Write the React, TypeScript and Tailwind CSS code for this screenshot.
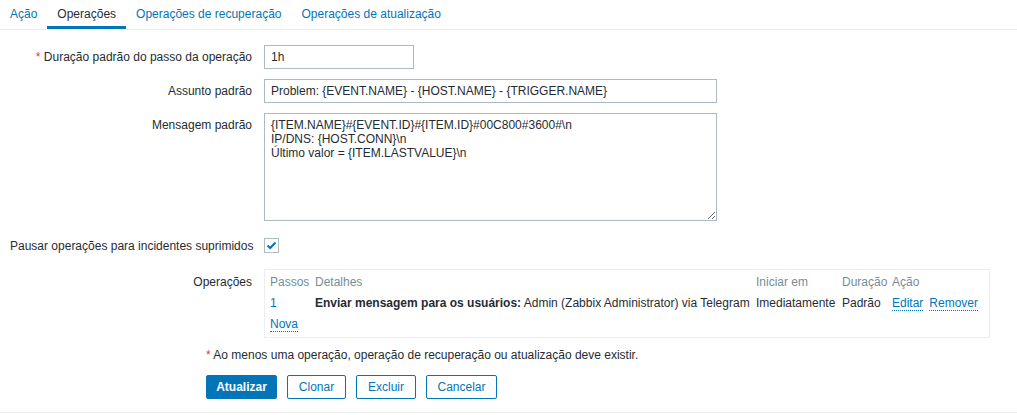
import type { ReactNode } from "react";

const tabs = [
  "Ação",
  "Operações",
  "Operações de recuperação",
  "Operações de atualização",
];

const message =
  "{ITEM.NAME}#{EVENT.ID}#{ITEM.ID}#00C800#3600#\\n\nIP/DNS: {HOST.CONN}\\n\nÚltimo valor = {ITEM.LASTVALUE}\\n";

function Row({
  label,
  required,
  className = "",
  labelClass = "",
  children,
}: {
  label: string;
  required?: boolean;
  className?: string;
  labelClass?: string;
  children: ReactNode;
}) {
  return (
    <div className={`flex items-start ${className}`}>
      <div
        className={`w-[264px] shrink-0 pr-[12px] text-right leading-[24px] whitespace-nowrap ${labelClass}`}
      >
        {required && <span className="text-[#e33734]">* </span>}
        {label}
      </div>
      {children}
    </div>
  );
}

function DottedLink({ children, className = "" }: { children: ReactNode; className?: string }) {
  return (
    <a
      className={`inline-block cursor-pointer border-b border-dotted border-[#0275b8] leading-[13px] text-[#0275b8] ${className}`}
    >
      {children}
    </a>
  );
}

export default function App() {
  return (
    <div className="min-h-screen bg-white font-['Liberation_Sans',Arial,sans-serif] text-[12px] text-[#1f2c33]">
      <div className="border-b border-[#ebeef0] pb-[13px]">
        {/* Tabs */}
        <div className="flex h-[30px] border-b border-[#ebeef0]">
          {tabs.map((t, i) => (
            <div
              key={t}
              className={`px-[10px] pt-[7px] leading-[14px] ${
                i === 1
                  ? "border-b-[3px] border-[#0275b8] text-[#1f2c33]"
                  : "text-[#0275b8]"
              }`}
            >
              {t}
            </div>
          ))}
        </div>

        {/* Form */}
        <div className="mt-[15px]">
          <Row label="Duração padrão do passo da operação" required>
            <input
              defaultValue="1h"
              className="h-[24px] w-[150px] border border-[#acbbc2] px-[6px] text-[12px] text-[#1f2c33] outline-none"
            />
          </Row>

          <Row label="Assunto padrão" className="mt-[10px]">
            <input
              defaultValue="Problem: {EVENT.NAME} - {HOST.NAME} - {TRIGGER.NAME}"
              className="h-[24px] w-[453px] border border-[#acbbc2] px-[6px] text-[12px] text-[#1f2c33] outline-none"
            />
          </Row>

          <Row label="Mensagem padrão" className="mt-[10px]">
            <textarea
              defaultValue={message}
              className="h-[108px] w-[453px] border border-[#acbbc2] px-[6px] pt-[4px] text-[12px] leading-[14px] text-[#1f2c33] outline-none"
            />
          </Row>

          <div className="mt-[13px] flex items-start">
            <div className="w-[264px] shrink-0 pl-[10px] pr-[12px] text-right leading-[24px] whitespace-nowrap">
              Pausar operações para incidentes suprimidos
            </div>
            <div className="mt-[4px] flex h-[15px] w-[15px] items-center justify-center border border-[#acbbc2] bg-white">
              <svg width="11" height="9" viewBox="0 0 11 9">
                <path
                  d="M1.5 4.5 L4.2 7 L9.5 1.5"
                  fill="none"
                  stroke="#0275b8"
                  strokeWidth="2"
                />
              </svg>
            </div>
          </div>

          <Row label="Operações" className="mt-[11px]" labelClass="pt-[1px]">
            <div className="w-[726px] border border-[#ebeef0] px-[5px] pt-[2px] pb-[2px]">
              <div className="grid grid-cols-[45px_441px_86px_50px_1fr] leading-[21px] whitespace-nowrap">
                <div className="text-[#768d99]">Passos</div>
                <div className="text-[#768d99]">Detalhes</div>
                <div className="text-[#768d99]">Iniciar em</div>
                <div className="text-[#768d99]">Duração</div>
                <div className="text-[#768d99]">Ação</div>

                <div className="text-[#0275b8]">1</div>
                <div>
                  <span className="font-bold">Enviar mensagem para os usuários:</span>{" "}
                  Admin (Zabbix Administrator) via Telegram
                </div>
                <div>Imediatamente</div>
                <div>Padrão</div>
                <div>
                  <DottedLink className="mr-[6px]">Editar</DottedLink>
                  <DottedLink>Remover</DottedLink>
                </div>

                <div className="col-span-5">
                  <DottedLink>Nova</DottedLink>
                </div>
              </div>
            </div>
          </Row>

          {/* Footer */}
          <div className="mt-[5px] pl-[206px] leading-[24px]">
            <span className="text-[#e33734]">*</span> Ao menos uma operação,
            operação de recuperação ou atualização deve existir.
          </div>
          <div className="mt-[8px] flex gap-[10px] pl-[206px]">
            <button className="h-[24px] w-[71px] rounded-[2px] border border-[#0275b8] bg-[#0275b8] text-[12px] font-bold text-white">
              Atualizar
            </button>
            <button className="h-[24px] w-[59px] rounded-[2px] border border-[#0275b8] bg-white text-[12px] text-[#0275b8]">
              Clonar
            </button>
            <button className="h-[24px] w-[60px] rounded-[2px] border border-[#0275b8] bg-white text-[12px] text-[#0275b8]">
              Excluir
            </button>
            <button className="h-[24px] w-[71px] rounded-[2px] border border-[#0275b8] bg-white text-[12px] text-[#0275b8]">
              Cancelar
            </button>
          </div>
        </div>
      </div>
    </div>
  );
}
